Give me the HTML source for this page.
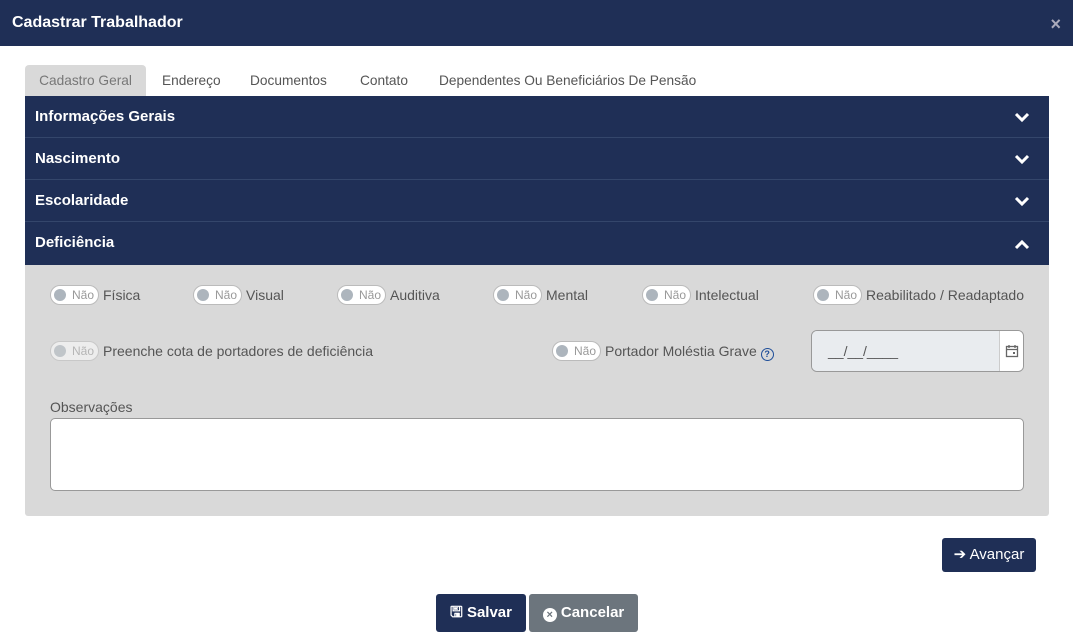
<!DOCTYPE html><html><head><meta charset="utf-8"><style>
*{box-sizing:border-box;margin:0;padding:0}
body{width:1073px;height:643px;background:#fff;font-family:"Liberation Sans",sans-serif;position:relative;overflow:hidden;color:#555}
.hdr{position:absolute;left:0;top:0;width:1073px;height:46px;background:#1f2f56;color:#fff;font-weight:bold;font-size:16px;padding:14px 12px}
.x{position:absolute;right:12px;top:14px;color:#aab;font-size:18px;font-weight:bold}
.tabs{position:absolute;top:65px;left:25px;height:31px;font-size:13.7px;color:#555}
.tab{position:absolute;top:0;height:31px;line-height:31px;white-space:nowrap}
.bar{position:absolute;left:25px;width:1024px;background:#1f2f56;color:#fff;font-weight:bold;font-size:15px;padding-left:10px;border-bottom:1px solid #34466b}
.bar svg{position:absolute;right:19px;top:50%;margin-top:-5px}
.panel{position:absolute;left:25px;top:265px;width:1024px;height:251px;background:#d9d9d9;border-radius:0 0 3px 3px}
.tg{position:absolute;height:20px;width:49px;border:1px solid #bbb;border-radius:10px;background:#fff;font-size:12px;color:#999;line-height:18px;padding-left:21px}
.tg:before{content:"";position:absolute;left:3px;top:3px;width:12px;height:12px;border-radius:50%;background:#adb5bd}
.lb{position:absolute;font-size:14px;color:#555;line-height:20px;white-space:nowrap}
.btn{position:absolute;color:#fff;font-weight:bold;border-radius:3px;font-size:15px;text-align:center}
</style></head><body>
<div class="hdr">Cadastrar Trabalhador<span class="x">×</span></div>
<div class="tabs">
<div class="tab" style="left:0;width:121px;background:#d9d9d9;border-radius:4px 4px 0 0;text-align:center;color:#777">Cadastro Geral</div>
<div class="tab" style="left:137px">Endereço</div>
<div class="tab" style="left:225px">Documentos</div>
<div class="tab" style="left:335px">Contato</div>
<div class="tab" style="left:414px">Dependentes Ou Beneficiários De Pensão</div>
</div>
<div class="bar" style="top:96px;height:42px;line-height:41px">Informações Gerais<svg width="16" height="11"><path d="M2 2l6 6 6-6" stroke="#fff" stroke-width="3" fill="none"/></svg></div>
<div class="bar" style="top:138px;height:42px;line-height:41px">Nascimento<svg width="16" height="11"><path d="M2 2l6 6 6-6" stroke="#fff" stroke-width="3" fill="none"/></svg></div>
<div class="bar" style="top:180px;height:42px;line-height:41px">Escolaridade<svg width="16" height="11"><path d="M2 2l6 6 6-6" stroke="#fff" stroke-width="3" fill="none"/></svg></div>
<div class="bar" style="top:222px;height:43px;line-height:42px;border:none">Deficiência<svg width="16" height="11"><path d="M2 9l6-6 6 6" stroke="#fff" stroke-width="3" fill="none"/></svg></div>
<div class="panel"></div>
<div class="tg" style="left:50px;top:285px">Não</div><div class="lb" style="left:103px;top:285px">Física</div>
<div class="tg" style="left:193px;top:285px">Não</div><div class="lb" style="left:246px;top:285px">Visual</div>
<div class="tg" style="left:337px;top:285px">Não</div><div class="lb" style="left:390px;top:285px">Auditiva</div>
<div class="tg" style="left:493px;top:285px">Não</div><div class="lb" style="left:546px;top:285px">Mental</div>
<div class="tg" style="left:642px;top:285px">Não</div><div class="lb" style="left:695px;top:285px">Intelectual</div>
<div class="tg" style="left:813px;top:285px">Não</div><div class="lb" style="left:866px;top:285px">Reabilitado / Readaptado</div>
<div class="tg" style="left:50px;top:341px;opacity:.55">Não</div><div class="lb" style="left:103px;top:341px">Preenche cota de portadores de deficiência</div>
<div class="tg" style="left:552px;top:341px">Não</div><div class="lb" style="left:605px;top:341px">Portador Moléstia Grave <span style="display:inline-block;width:13px;height:13px;border:1.5px solid #1f4e99;border-radius:50%;font-size:9px;line-height:10px;text-align:center;color:#1f4e99;font-weight:bold;vertical-align:-1px">?</span></div>
<div style="position:absolute;left:811px;top:330px;width:213px;height:42px;border:1px solid #999;border-radius:6px;background:#e9ecef;overflow:hidden">
<div style="position:absolute;left:0;top:0;width:187px;height:40px;background:#e9ecef;padding:12px 16px;font-size:14px;color:#555">__/__/____</div>
<div style="position:absolute;left:187px;top:0;width:25px;height:40px;background:#fff;border-left:1px solid #ccc"><svg width="14" height="14" style="position:absolute;left:5px;top:13px"><rect x="1.5" y="2.5" width="11" height="10" fill="none" stroke="#666" stroke-width="1.3"/><path d="M1.5 5.5h11M4 1v3M10 1v3" stroke="#666" stroke-width="1.3"/><rect x="8" y="8" width="2" height="2" fill="#666"/></svg></div></div>
<div class="lb" style="left:50px;top:397px">Observações</div>
<div style="position:absolute;left:50px;top:418px;width:974px;height:73px;background:#fff;border:1px solid #999;border-radius:5px"></div>
<div class="btn" style="left:942px;top:538px;width:94px;height:34px;line-height:34px;background:#1f2f56;font-weight:normal">➔ Avançar</div>
<div class="btn" style="left:436px;top:594px;width:90px;height:38px;line-height:38px;background:#1f2f56">🖫 Salvar</div>
<div class="btn" style="left:529px;top:594px;width:109px;height:38px;line-height:38px;background:#6c757d"><span style="display:inline-block;width:14px;height:14px;border-radius:50%;background:#fff;color:#6c757d;font-size:11px;line-height:14px;vertical-align:-1px">×</span> Cancelar</div>
</body></html>
